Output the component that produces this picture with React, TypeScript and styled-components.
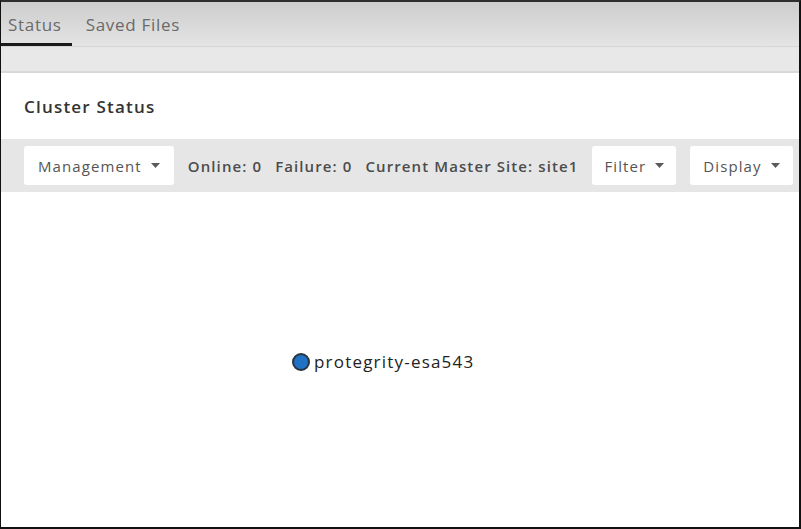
import styled, { createGlobalStyle } from "styled-components";

const GlobalStyle = createGlobalStyle`
  html, body {
    margin: 0;
    padding: 0;
    background: #ffffff;
  }
  * {
    box-sizing: border-box;
  }
`;

const tabs = ["Status", "Saved Files"];

function Caret() {
  return (
    <svg width="9" height="5" viewBox="0 0 9 5">
      <path d="M0 0 L9 0 L4.5 5 Z" fill="#5a5a5a" />
    </svg>
  );
}

function App() {
  return (
    <>
      <GlobalStyle />
      <Frame>
        <TabBar>
          {tabs.map((tab, index) => (
            <Tab key={tab} active={index === 0}>
              {tab}
            </Tab>
          ))}
        </TabBar>
        <SubBand />
        <Panel>
          <PanelTitle>Cluster Status</PanelTitle>
          <Toolbar>
            <DropButton pad={14}>
              Management <Caret />
            </DropButton>
            <Stats>
              <span>Online: 0</span>
              <span>Failure: 0</span>
              <span>Current Master Site: site1</span>
            </Stats>
            <DropButton pad={12}>
              Filter <Caret />
            </DropButton>
            <DropButton pad={13}>
              Display <Caret />
            </DropButton>
          </Toolbar>
          <Canvas>
            <Node>
              <NodeDot />
              protegrity-esa543
            </Node>
          </Canvas>
        </Panel>
      </Frame>
    </>
  );
}

export default App;

const Frame = styled.div`
  width: 801px;
  height: 529px;
  display: flex;
  flex-direction: column;
  border-top: 2px solid #2e2e2e;
  border-left: 1px solid #111;
  border-right: 2px solid #111;
  border-bottom: 2px solid #111;
  font-family: "Open Sans", "Noto Sans", sans-serif;
  overflow: hidden;
`;

const TabBar = styled.div`
  height: 45px;
  display: flex;
  align-items: stretch;
  gap: 14px;
  background: linear-gradient(to bottom, #cdcdcd, #e4e4e4);
  border-bottom: 1px solid #d6d6d6;
`;

const Tab = styled.div<{ active: boolean }>`
  display: flex;
  align-items: center;
  padding: 3px ${({ active }) => (active ? "10px" : "0")} 0
    ${({ active }) => (active ? "7px" : "0")};
  font-size: 17px;
  letter-spacing: 0.7px;
  color: #6a6a6a;
  border-bottom: 3px solid ${({ active }) => (active ? "#1a1a1a" : "transparent")};
`;

const SubBand = styled.div`
  height: 26px;
  background: #e8e8e8;
  border-bottom: 2px solid #d8d8d8;
`;

const Panel = styled.div`
  flex: 1;
  display: flex;
  flex-direction: column;
  background: #fff;
`;

const PanelTitle = styled.div`
  height: 66px;
  display: flex;
  align-items: center;
  padding-left: 23px;
  font-size: 17px;
  font-weight: 600;
  letter-spacing: 1.2px;
  color: #333;
`;

const Toolbar = styled.div`
  height: 53px;
  display: flex;
  align-items: center;
  gap: 14px;
  padding: 0 0 0 23px;
  background: #e6e6e6;
`;

const DropButton = styled.div<{ pad: number }>`
  height: 39px;
  display: flex;
  align-items: center;
  gap: 9px;
  padding: 0 ${({ pad }) => pad}px;
  background: #fff;
  border-radius: 3px;
  font-size: 15px;
  color: #555;
  letter-spacing: 1.1px;
`;

const Stats = styled.div`
  display: flex;
  gap: 13px;
  font-size: 15px;
  font-weight: 600;
  letter-spacing: 1.1px;
  color: #4c4c4c;
`;

const Canvas = styled.div`
  flex: 1;
  position: relative;
`;

const Node = styled.div`
  position: absolute;
  left: 291px;
  top: 158px;
  display: flex;
  align-items: center;
  gap: 4px;
  font-size: 17px;
  letter-spacing: 1.2px;
  color: #222;
`;

const NodeDot = styled.span`
  width: 18px;
  height: 18px;
  border-radius: 50%;
  background: #1f72c4;
  border: 2px solid #2a3440;
`;
